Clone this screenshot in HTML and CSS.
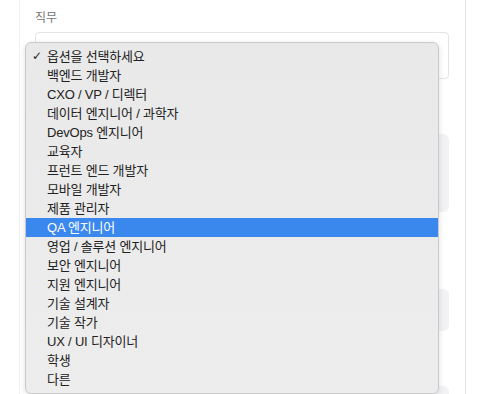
FILE: index.html
```html
<!DOCTYPE html>
<html lang="ko">
<head>
<meta charset="utf-8">
<title>직무</title>
<link rel="stylesheet" href="styles.css">
</head>
<body>
	<div class="page">
		<div class="card">
			<div class="field">
				<label class="label">직무</label>
				<div class="select"></div>
			</div>
			<div class="field field-tall">
				<div class="box box-tall"></div>
			</div>
			<div class="field field-mid">
				<div class="box box-short"></div>
			</div>
			<div class="field field-last">
				<div class="box box-short"></div>
			</div>
		</div>

		<ul class="menu">
			<li class="option checked">옵션을 선택하세요</li>
			<li class="option">백엔드 개발자</li>
			<li class="option">CXO / VP / 디렉터</li>
			<li class="option">데이터 엔지니어 / 과학자</li>
			<li class="option">DevOps 엔지니어</li>
			<li class="option">교육자</li>
			<li class="option">프런트 엔드 개발자</li>
			<li class="option">모바일 개발자</li>
			<li class="option">제품 관리자</li>
			<li class="option active">QA 엔지니어</li>
			<li class="option">영업 / 솔루션 엔지니어</li>
			<li class="option">보안 엔지니어</li>
			<li class="option">지원 엔지니어</li>
			<li class="option">기술 설계자</li>
			<li class="option">기술 작가</li>
			<li class="option">UX / UI 디자이너</li>
			<li class="option">학생</li>
			<li class="option">다른</li>
		</ul>
	</div>
</body>
</html>
```

FILE: styles.css
```css
html, body {
	margin: 0;
	padding: 0;
	background: #fff;
}

body {
	font-family: "Liberation Sans", "Noto Sans CJK KR", sans-serif;
	color: #222;
	height: 394px;
	overflow: hidden;
}

.page {
	position: relative;
	height: 394px;
	overflow: hidden;
	padding-left: 19px;
}

.card {
	width: 447px;
	height: 394px;
	overflow: hidden;
	border-left: 1px solid #f0f0f0;
	border-right: 1px solid #e6e6e6;
	padding: 11px 16px 0 15px;
	box-sizing: border-box;
}

.label {
	display: block;
	font-size: 12px;
	color: #777;
	line-height: 14px;
	margin-bottom: 7px;
}

.select {
	height: 47px;
	border: 1px solid #e3e3e8;
	border-radius: 4px;
	box-sizing: border-box;
}

.field-tall {
	margin-top: 55px;
}

.box {
	background: #f2f2f4;
	border-radius: 6px;
}

.box-tall {
	height: 78px;
}

.field-mid {
	margin-top: 77px;
}

.box-short {
	height: 42px;
}

.field-last {
	margin-top: 55px;
}

/* opened select popup */
.menu {
	position: absolute;
	left: 25px;
	top: 42px;
	width: 414px;
	height: 352px;
	margin: 0;
	padding: 4px 0 0;
	list-style: none;
	box-sizing: border-box;
	background: linear-gradient(#e9e9e9, #ededed);
	border: 1px solid #c9c9c9;
	border-radius: 6px;
	box-shadow: 0 2px 6px rgba(0, 0, 0, 0.12);
	font-size: 13px;
}

.option {
	height: 19px;
	line-height: 19px;
	padding-left: 21px;
	letter-spacing: -0.2px;
	position: relative;
	white-space: nowrap;
}

.option.checked:before {
	content: "✓";
	position: absolute;
	left: 6px;
	top: 0;
	font-family: "DejaVu Sans", sans-serif;
	font-size: 12px;
}

.option.active {
	background: #3a88ee;
	color: #fff;
}
```
